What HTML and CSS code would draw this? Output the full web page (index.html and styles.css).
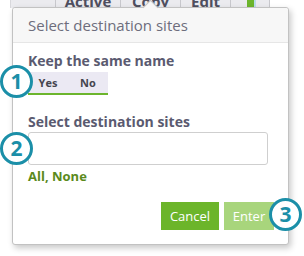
FILE: index.html
```html
<!DOCTYPE html>
<html>
<head>
<meta charset="utf-8">
<link rel="stylesheet" href="styles.css">
</head>
<body>
<div class="toolbar">
  <div class="cell c0"></div>
  <div class="cell c1"><span>Active</span></div>
  <div class="cell c2"><span>Copy</span></div>
  <div class="cell c3"><span>Edit</span></div>
  <div class="cell c4"><i class="green"></i></div>
</div>
<div class="popover">
  <div class="arrow"></div>
  <div class="pop-header">Select destination sites</div>
  <div class="pop-body">
    <div class="label">Keep the same name</div>
    <div class="toggle"><span>Yes</span><span>No</span></div>
    <div class="label label2">Select destination sites</div>
    <div class="input"></div>
    <div class="links">All, None</div>
  </div>
  <div class="pop-footer">
    <button class="btn cancel">Cancel</button>
    <button class="btn enter">Enter</button>
  </div>
</div>
<div class="badge b1">1</div>
<div class="badge b2">2</div>
<div class="badge b3">3</div>
</body>
</html>
```
FILE: styles.css
```css
html, body {
  margin: 0;
  padding: 0;
  background: #ffffff;
  font-family: "Open Sans", "Liberation Sans", sans-serif;
}
body {
  width: 304px;
  height: 256px;
  overflow: hidden;
  position: relative;
}
.toolbar {
  display: flex;
  margin-left: 10px;
  width: 260px;
  height: 8px;
  background: #ebebef;
  overflow: hidden;
}
.cell {
  height: 8px;
  border-left: 1px solid #c8c8cd;
  box-sizing: border-box;
  display: flex;
  justify-content: center;
  overflow: hidden;
}
.cell span {
  display: block;
  font-size: 15px;
  font-weight: 700;
  line-height: 15px;
  margin-top: -6px;
  color: #4f4f5f;
}
.c0 { width: 45px; border-left-color: #d8d8dc; }
.c1 { width: 65px; }
.c2 { width: 60px; }
.c3 { width: 50px; }
.c4 { width: 40px; border-right: 1px solid #c8c8cd; }
.green {
  display: block;
  width: 7px;
  height: 8px;
  background: #6cb52d;
  border-right: 2px solid #b9dcea;
  margin-left: 2px;
}
.popover {
  position: absolute;
  left: 12px;
  top: 7px;
  width: 277px;
  height: 238px;
  box-sizing: border-box;
  border: 1px solid #c2c2c2;
  border-radius: 3px;
  background: #ffffff;
  box-shadow: 2px 3px 6px rgba(0, 0, 0, 0.22);
  display: flex;
  flex-direction: column;
}
.arrow {
  position: absolute;
  top: -6px;
  left: 132px;
  width: 10px;
  height: 10px;
  background: #f7f7f7;
  border-top: 1px solid #c2c2c2;
  border-left: 1px solid #c2c2c2;
  transform: rotate(45deg);
}
.pop-header {
  height: 34px;
  line-height: 34px;
  padding-left: 15px;
  background: #f7f7f7;
  border-bottom: 1px solid #e6e6e6;
  border-radius: 3px 3px 0 0;
  font-size: 15px;
  color: #6d6d7c;
}
.pop-body {
  flex: 1;
  padding: 9px 15px 0 15px;
}
.label {
  font-size: 14px;
  font-weight: 700;
  line-height: 18px;
  color: #5a5a70;
}
.toggle {
  display: flex;
  width: 80px;
  height: 21px;
  margin-top: 2px;
  background: #ebe9f3;
  border-bottom: 2px solid #6cb52d;
}
.toggle span {
  width: 40px;
  text-align: center;
  font-size: 11px;
  font-weight: 700;
  line-height: 21px;
  color: #45454f;
}
.label2 {
  margin-top: 18px;
}
.input {
  margin-top: 1px;
  width: 240px;
  height: 33px;
  box-sizing: border-box;
  border: 1px solid #cfcfcf;
  border-radius: 3px;
}
.links {
  margin-top: 3px;
  font-size: 13px;
  font-weight: 700;
  line-height: 16px;
  color: #5b8a1c;
}
.pop-footer {
  display: flex;
  justify-content: flex-end;
  gap: 5px;
  padding: 0 14px 14px 0;
}
.btn {
  height: 28px;
  border: none;
  border-radius: 0;
  font-family: "Open Sans", "Liberation Sans", sans-serif;
  font-size: 13px;
  color: #ffffff;
  padding: 0;
}
.cancel {
  width: 58px;
  background: #6cb52a;
}
.enter {
  width: 50px;
  background: #a8d57c;
}
.badge {
  position: absolute;
  width: 33px;
  height: 33px;
  box-sizing: border-box;
  border: 3px solid #1b8fa8;
  border-radius: 50%;
  background: #ffffff;
  color: #1b8fa8;
  font-size: 21px;
  font-weight: 700;
  line-height: 27px;
  text-align: center;
}
.b1 { left: 0px; top: 65px; }
.b2 { left: 0px; top: 132px; }
.b3 { left: 269px; top: 198px; }
```
